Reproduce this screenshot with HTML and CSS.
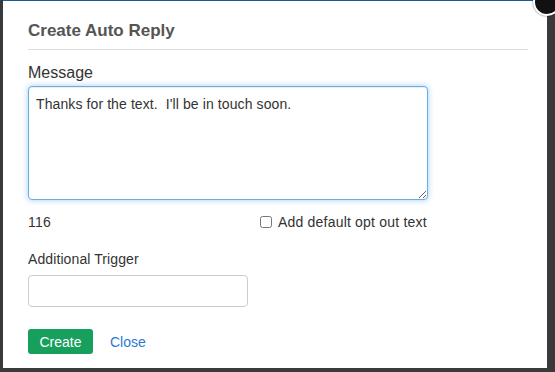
FILE: index.html
```html
<!DOCTYPE html>
<html>
<head>
<meta charset="utf-8">
<link rel="stylesheet" href="styles.css">
</head>
<body>
<div class="modal">
  <span class="close-x" aria-label="close"></span>
  <h2 class="title">Create Auto Reply</h2>
  <div class="field">
    <label class="label-lg">Message</label>
    <textarea class="msg">Thanks for the text.  I'll be in touch soon.</textarea>
  </div>
  <div class="meta">
    <span class="count">116</span>
    <label class="opt"><input type="checkbox" class="chk"> Add default opt out text</label>
  </div>
  <div class="field trigger">
    <label class="label-sm">Additional Trigger</label>
    <input type="text" class="trig-input">
  </div>
  <div class="actions">
    <button class="btn-create">Create</button>
    <a class="link-close" href="#">Close</a>
  </div>
</div>
</body>
</html>
```
FILE: styles.css
```css
html, body {
  margin: 0;
  padding: 0;
  background: #3a3a3a;
  width: 555px;
  height: 372px;
  overflow: hidden;
  font-family: "Liberation Sans", Arial, sans-serif;
}
.modal {
  position: relative;
  margin-left: 3px;
  width: 544px;
  height: 368px;
  background: #fff;
  border-top: 1px solid #1e5c8c;
  box-sizing: border-box;
  padding: 18px 19px 0 25px;
}
.close-x {
  position: absolute;
  right: -14px;
  top: -13px;
  width: 24px;
  height: 24px;
  border-radius: 50%;
  background: #111;
  border: 2px solid #fff;
  box-shadow: 0 0 2px rgba(0,0,0,0.6);
}
.title {
  margin: 0;
  font-size: 17px;
  font-weight: bold;
  color: #555;
  line-height: 24px;
  padding-bottom: 6px;
  border-bottom: 1px solid #ddd;
}
.field {
  display: flex;
  flex-direction: column;
}
.label-lg {
  margin-top: 13px;
  font-size: 16px;
  color: #333;
  line-height: 20px;
}
.msg {
  margin-top: 3px;
  width: 400px;
  height: 114px;
  box-sizing: border-box;
  border: 1px solid #66afe9;
  border-radius: 4px;
  box-shadow: inset 0 1px 1px rgba(0,0,0,.075), 0 0 6px rgba(102,175,233,.6);
  outline: none;
  padding: 7px 7px;
  font-family: "Liberation Sans", Arial, sans-serif;
  font-size: 14px;
  letter-spacing: 0.1px;
  line-height: 20px;
  color: #333;
}
.meta {
  display: flex;
  align-items: center;
  margin-top: 14px;
  width: 400px;
  font-size: 14px;
  letter-spacing: 0.2px;
  color: #333;
}
.count {
  width: 232px;
}
.opt {
  display: flex;
  align-items: center;
  gap: 6px;
}
.chk {
  margin: 0;
  width: 12px;
  height: 12px;
}
.trigger {
  margin-top: 20px;
}
.label-sm {
  font-size: 14px;
  letter-spacing: 0.1px;
  color: #333;
  line-height: 18px;
}
.trig-input {
  margin-top: 7px;
  width: 220px;
  height: 32px;
  box-sizing: border-box;
  border: 1px solid #ccc;
  border-radius: 4px;
  outline: none;
}
.actions {
  display: flex;
  align-items: center;
  gap: 17px;
  margin-top: 22px;
}
.btn-create {
  background: #16a05c;
  color: #fff;
  border: none;
  border-radius: 3px;
  font-family: "Liberation Sans", Arial, sans-serif;
  font-size: 14px;
  width: 65px;
  height: 25px;
  padding: 0;
}
.link-close {
  color: #2a7ad2;
  text-decoration: none;
  font-size: 14px;
}
```
